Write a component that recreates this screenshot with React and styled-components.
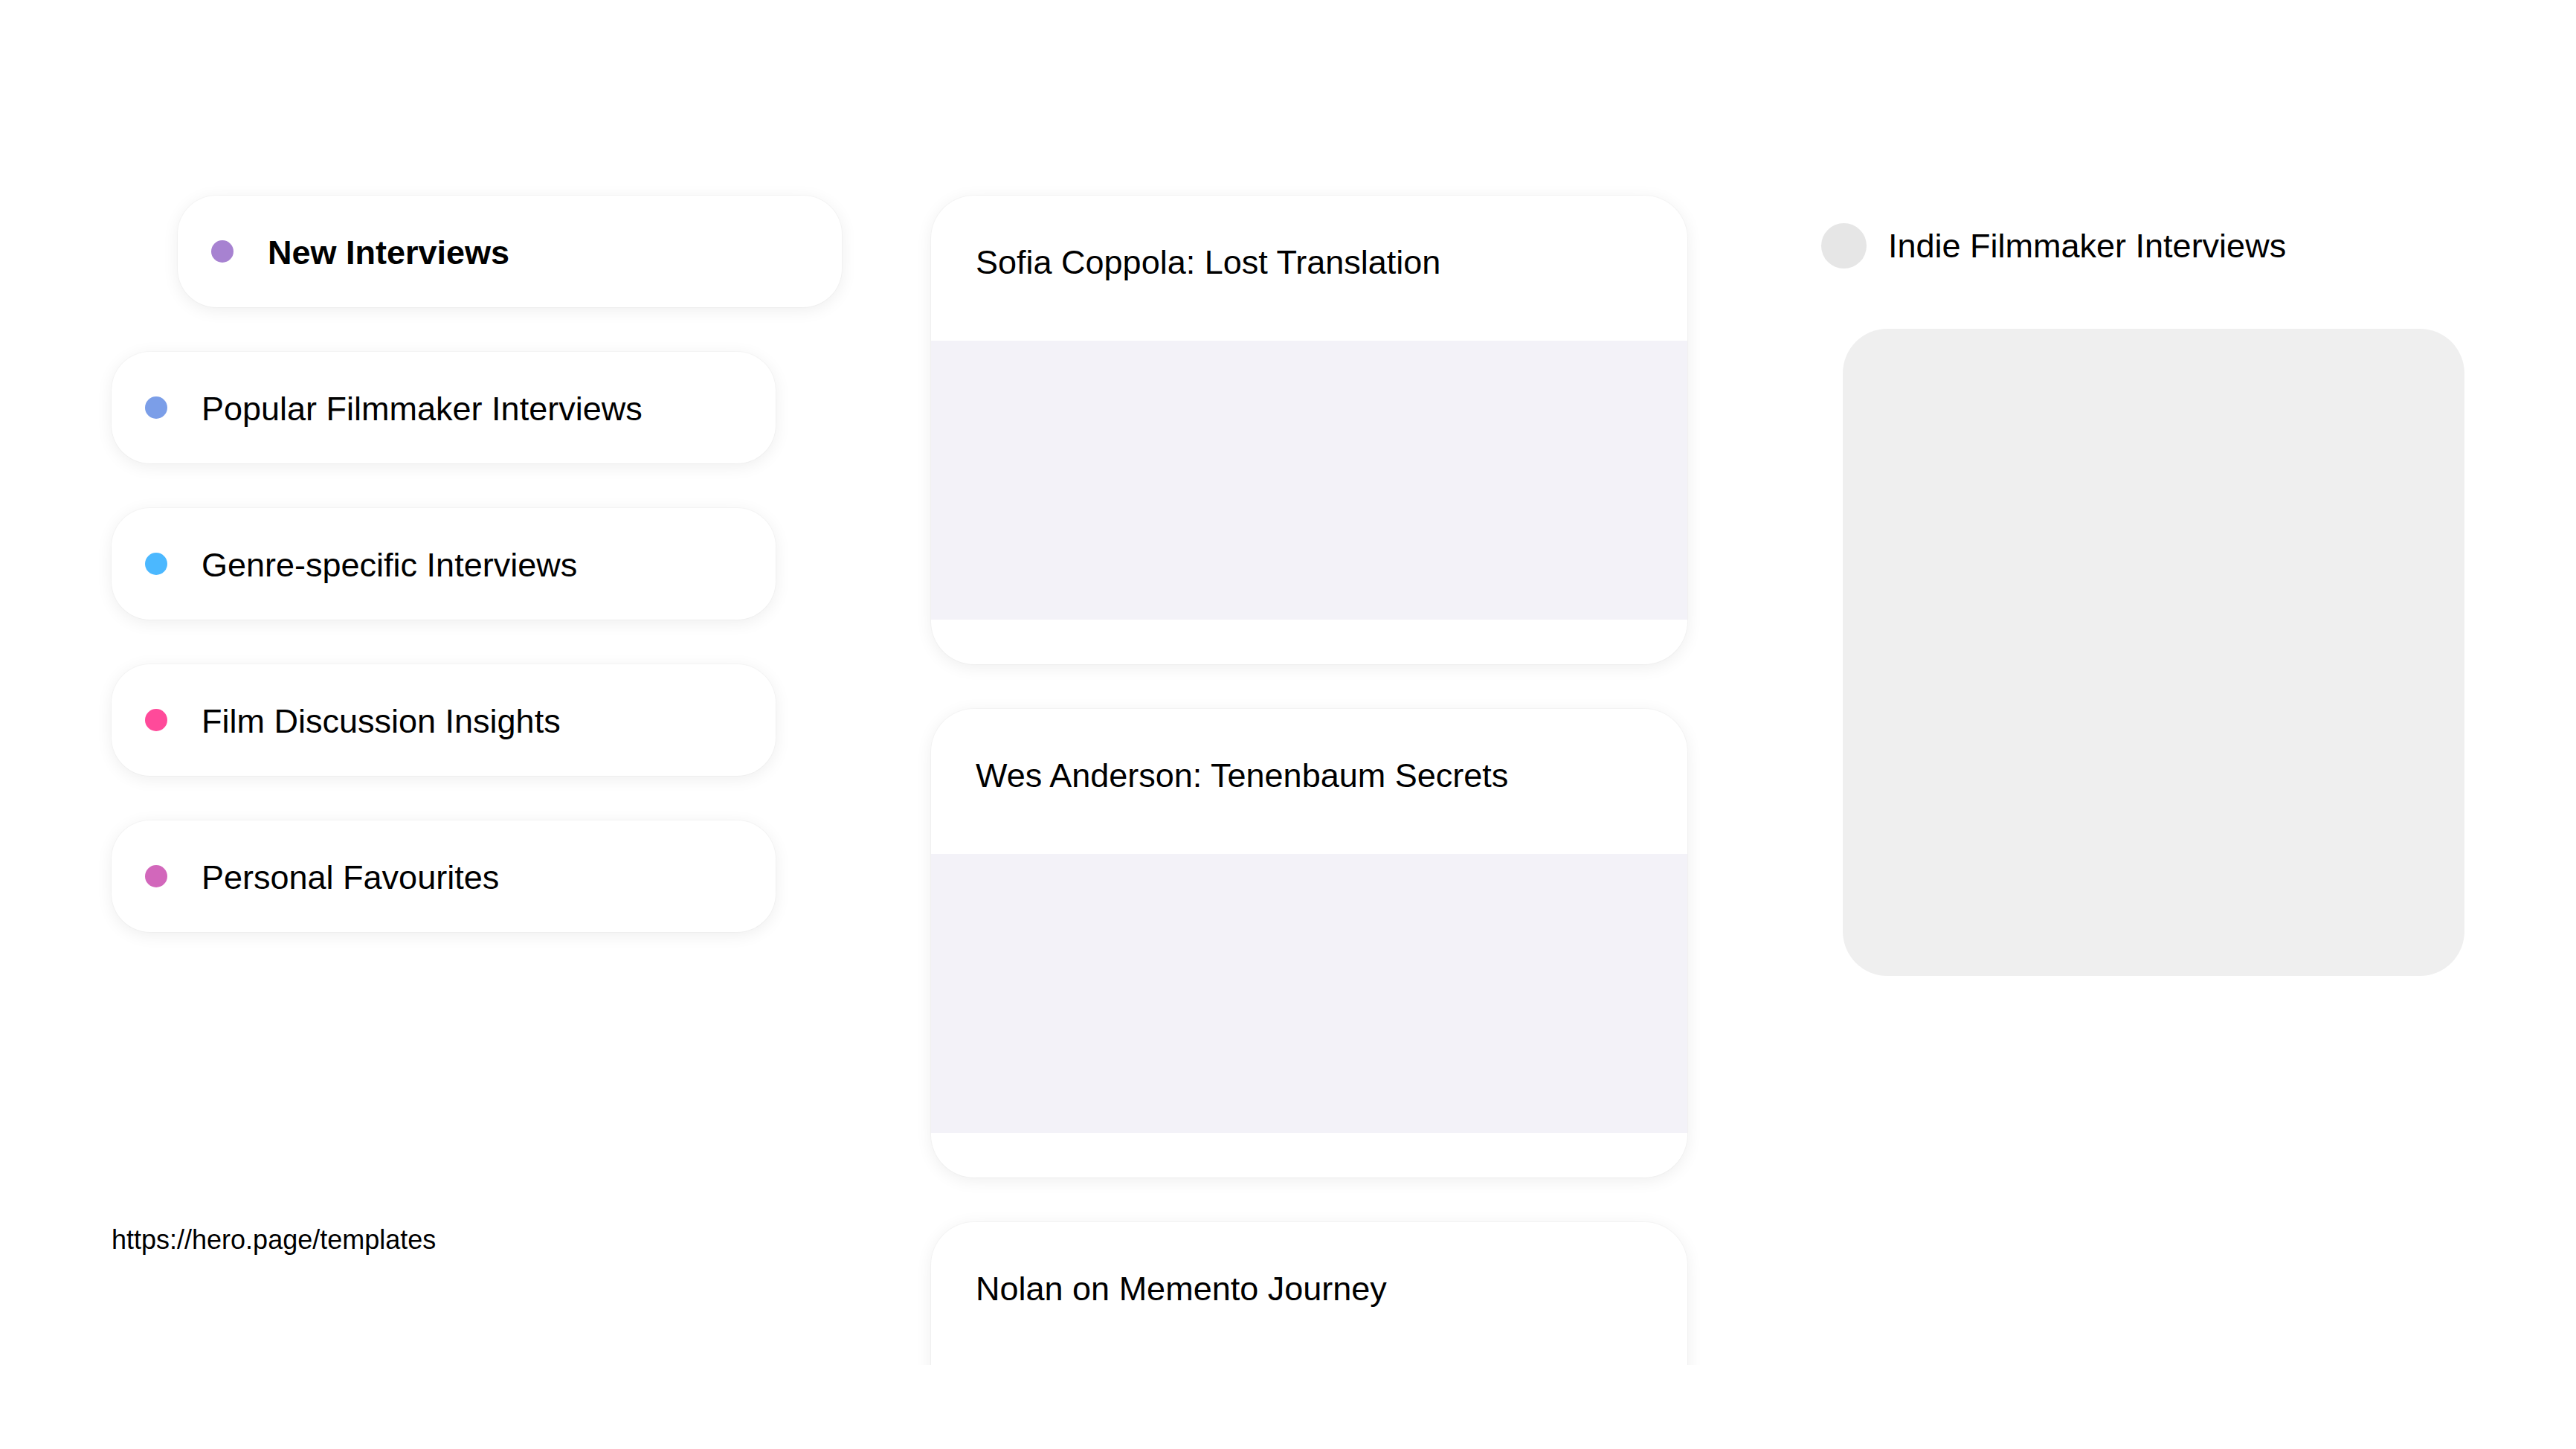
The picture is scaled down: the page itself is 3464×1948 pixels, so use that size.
import React from "react"
import styled, { createGlobalStyle } from "styled-components"

const GlobalStyle = createGlobalStyle`
  html, body {
    margin: 0;
    padding: 0;
    background: #ffffff;
  }
  body {
    font-family: "Liberation Sans", Arial, sans-serif;
    color: #000000;
  }
`

const categories = [
  { label: "New Interviews", color: "#a782d1", active: true },
  { label: "Popular Filmmaker Interviews", color: "#7b9ee8" },
  { label: "Genre-specific Interviews", color: "#4bb8ff" },
  { label: "Film Discussion Insights", color: "#ff4a9a" },
  { label: "Personal Favourites", color: "#d267bb" },
]

const interviews = [
  "Sofia Coppola: Lost Translation",
  "Wes Anderson: Tenenbaum Secrets",
  "Nolan on Memento Journey",
]

const App = () => {
  return (
    <>
      <GlobalStyle />
      <Page>
        <Sidebar>
          <CategoryList>
            {categories.map((c) => (
              <Pill key={c.label} $active={c.active}>
                <Dot $color={c.color} />
                <Label>{c.label}</Label>
              </Pill>
            ))}
          </CategoryList>
          <SourceLink>https://hero.page/templates</SourceLink>
        </Sidebar>

        <Feed>
          {interviews.map((title) => (
            <Card key={title}>
              <CardHeader>{title}</CardHeader>
              <CardMedia />
              <CardFooter />
            </Card>
          ))}
        </Feed>

        <Aside>
          <AsideHeader>
            <Avatar />
            <span>Indie Filmmaker Interviews</span>
          </AsideHeader>
          <Placeholder />
        </Aside>
      </Page>
    </>
  )
}

const Page = styled.main`
  display: flex;
  height: 1948px;
  box-sizing: border-box;
  padding: 203px 0 113px 150px;
  overflow: hidden;
`

const Sidebar = styled.section`
  width: 1102px;
  flex-shrink: 0;
  display: flex;
  flex-direction: column;
  padding: 60px 0 148px;
  box-sizing: border-box;
`

const CategoryList = styled.ul`
  list-style: none;
  margin: 0;
  padding: 0;
  display: flex;
  flex-direction: column;
  gap: 60px;
`

const Pill = styled.li`
  width: 893px;
  height: 150px;
  box-sizing: border-box;
  display: flex;
  align-items: center;
  gap: 46px;
  padding-left: 45px;
  margin-left: ${(p) => (p.$active ? "89px" : "0")};
  background: #ffffff;
  border-radius: 52px;
  box-shadow: 0 0 0 1px rgba(0, 0, 0, 0.025), 0 4px 22px rgba(0, 0, 0, 0.07);
  font-size: 45px;
  font-weight: ${(p) => (p.$active ? 700 : 400)};
  white-space: nowrap;
`

const Label = styled.span`
  padding-top: 3px;
`

const Dot = styled.i`
  width: 30px;
  height: 30px;
  border-radius: 50%;
  flex-shrink: 0;
  background: ${(p) => p.$color};
`

const SourceLink = styled.div`
  margin-top: auto;
  font-size: 36px;
  line-height: 40px;
`

const Feed = styled.section`
  width: 1017px;
  flex-shrink: 0;
  display: flex;
  flex-direction: column;
  gap: 60px;
  padding: 60px 30px 0;
  margin: 0 -30px;
  overflow: hidden;
`

const Card = styled.article`
  flex-shrink: 0;
  background: #ffffff;
  border-radius: 58px;
  overflow: hidden;
  box-shadow: 0 0 0 1px rgba(0, 0, 0, 0.025), 0 4px 22px rgba(0, 0, 0, 0.07);
`

const CardHeader = styled.h3`
  margin: 0;
  height: 195px;
  box-sizing: border-box;
  padding: 63px 60px 0;
  font-size: 45px;
  font-weight: 400;
  line-height: 54px;
  white-space: nowrap;
`

const CardMedia = styled.div`
  height: 375px;
  background: #f3f2f8;
`

const CardFooter = styled.div`
  height: 60px;
`

const Aside = styled.section`
  margin-left: 180px;
  width: 865px;
  flex-shrink: 0;
  padding-top: 97px;
`

const AsideHeader = styled.header`
  display: flex;
  align-items: center;
  gap: 29px;
  font-size: 45px;
  white-space: nowrap;
`

const Avatar = styled.div`
  width: 61px;
  height: 61px;
  border-radius: 50%;
  background: #e6e6e6;
  flex-shrink: 0;
`

const Placeholder = styled.div`
  margin: 81px 0 0 29px;
  width: 836px;
  height: 870px;
  border-radius: 60px;
  background: #efefef;
`

export default App
